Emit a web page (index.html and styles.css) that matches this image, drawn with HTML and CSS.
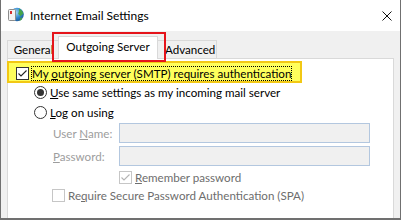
FILE: index.html
```html
<!DOCTYPE html>
<html>
<head>
<meta charset="utf-8">
<title>Internet Email Settings</title>
<link rel="stylesheet" href="styles.css">
</head>
<body>
<div class="window">
  <div class="titlebar">
    <svg class="app-icon" width="17" height="17" viewBox="0 0 17 17">
      <defs>
        <radialGradient id="globe" cx="0.4" cy="0.35" r="0.75">
          <stop offset="0" stop-color="#a6dcf7"/>
          <stop offset="0.55" stop-color="#2f86cc"/>
          <stop offset="1" stop-color="#1a4f8e"/>
        </radialGradient>
      </defs>
      <circle cx="10" cy="8.5" r="6.8" fill="url(#globe)"/>
      <path d="M12 2.6 Q15.6 4.2 16.4 8 Q14.6 8.4 13.6 10.6 Q12.6 8.6 11.2 8 Q12.4 5.6 12 2.6 Z" fill="#47a548"/>
      <path d="M13.5 11.5 Q15 12 15.6 11.2 Q14.6 14 12.6 15 Q13 13 13.5 11.5 Z" fill="#47a548"/>
      <rect x="1.5" y="3.5" width="7" height="11" rx="1" fill="#f2f2f2" stroke="#8c8c8c"/>
      <rect x="3" y="5" width="2" height="3" fill="#d62f2f"/>
    </svg>
    <span class="title">Internet Email Settings</span>
    <svg class="close" width="10" height="10" viewBox="0 0 10 10">
      <path d="M0.5 0.5 L9.5 9.5 M9.5 0.5 L0.5 9.5" stroke="#111" stroke-width="1" fill="none"/>
    </svg>
  </div>
  <div class="client">
    <div class="tabs">
      <div class="tab tab-general">General</div>
      <div class="tab tab-selected">Outgoing Server</div>
      <div class="tab tab-advanced">Advanced</div>
    </div>
    <div class="panel">
      <div class="highlight">
        <span class="checkbox">
          <svg width="11" height="11" viewBox="0 0 11 11"><path d="M1.5 5.5 L4 8 L9.5 2.5" stroke="#222" stroke-width="1.1" fill="none"/></svg>
        </span>
        <span class="focus-text">My <u>o</u>utgoing server (SMTP) requires authentication</span>
      </div>
      <div class="option first">
        <span class="radio on"></span>
        <span><u>U</u>se same settings as my incoming mail server</span>
      </div>
      <div class="option">
        <span class="radio"></span>
        <span><u>L</u>og on using</span>
      </div>
      <div class="field">
        <span class="field-label">User <u>N</u>ame:</span>
        <span class="input"></span>
      </div>
      <div class="field second">
        <span class="field-label"><u>P</u>assword:</span>
        <span class="input"></span>
      </div>
      <div class="check-row remember">
        <span class="checkbox disabled">
          <svg width="11" height="11" viewBox="0 0 11 11"><path d="M1.5 5.5 L4 8 L9.5 2.5" stroke="#b4b4b4" stroke-width="1.1" fill="none"/></svg>
        </span>
        <span class="check-label"><u>R</u>emember password</span>
      </div>
      <div class="check-row spa">
        <span class="checkbox disabled"></span>
        <span class="check-label">Re<u>q</u>uire Secure Password Authentication (SPA)</span>
      </div>
    </div>
  </div>
  <div class="callout"></div>
</div>
</body>
</html>
```
FILE: styles.css
```css
* {
  box-sizing: border-box;
}

html,
body {
  margin: 0;
  padding: 0;
}

body {
  width: 401px;
  height: 220px;
  overflow: hidden;
  background: #f0f0f0;
  font-family: Lato, "Noto Sans", sans-serif;
  font-size: 11.6px;
  color: #000;
}

.window {
  position: relative;
  width: 401px;
  height: 220px;
  border-left: 1px solid #707070;
  border-right: 1px solid #707070;
  border-bottom: 2px solid #707070;
  background: #f0f0f0;
  display: flex;
  flex-direction: column;
  overflow: hidden;
}

.titlebar {
  height: 31px;
  flex: none;
  background: #fff;
  display: flex;
  align-items: center;
  padding-left: 6px;
  padding-right: 8px;
}

.app-icon {
  flex: none;
  margin-top: -2px;
}

.title {
  margin-left: 6px;
  font-size: 12px;
  line-height: 16px;
  color: #000;
  margin-top: 1px;
}

.close {
  margin-left: auto;
  flex: none;
}

.client {
  flex: 1;
  display: flex;
  flex-direction: column;
  padding-top: 5px;
}

.tabs {
  display: flex;
  align-items: flex-end;
  height: 23px;
  padding-left: 6px;
  flex: none;
}

.tab {
  height: 18px;
  margin-bottom: 1px;
  border: 1px solid #d9d9d9;
  border-bottom: 0;
  background: #f0f0f0;
  line-height: 17px;
  white-space: nowrap;
  overflow: hidden;
}

.tab-general {
  width: 53px;
  text-align: center;
}

.tab-selected {
  position: relative;
  z-index: 1;
  width: 100px;
  height: 23px;
  margin: 0 -2px;
  background: #fff;
  text-align: center;
  padding-top: 2px;
  line-height: 16px;
}

.tab-advanced {
  width: 61px;
  padding-left: 8px;
}

.panel {
  flex: 1;
  margin: -1px 6px 0 6px;
  background: #fff;
  border: 1px solid #d9d9d9;
  border-bottom: 0;
  display: flex;
  flex-direction: column;
  align-items: flex-start;
}

.highlight {
  display: flex;
  align-items: center;
  margin: 2px 0 0 -1px;
  height: 22px;
  padding: 3px 8px 0 7px;
  background: #ffff5c;
  border: 2px solid #f2c814;
}

.checkbox {
  width: 13px;
  height: 13px;
  flex: none;
  border: 1px solid #333;
  display: flex;
  align-items: center;
  justify-content: center;
}

.highlight .checkbox {
  background: #fff;
}

.focus-text {
  margin-left: 2px;
  border: 1px dotted #000;
  line-height: 13px;
  white-space: nowrap;
}

u {
  text-decoration: underline;
  text-underline-offset: 1px;
}

.option {
  height: 20px;
  display: flex;
  align-items: center;
  padding-left: 26px;
  white-space: nowrap;
}

.option.first {
  margin-top: -1px;
}

.radio {
  width: 13px;
  height: 13px;
  flex: none;
  border: 1px solid #333;
  border-radius: 50%;
  background: #fff;
  margin-right: 3px;
  display: flex;
  align-items: center;
  justify-content: center;
}

.radio.on::after {
  content: "";
  width: 7px;
  height: 7px;
  border-radius: 50%;
  background: #333;
}

.field {
  display: flex;
  align-items: center;
  margin-top: 1px;
  height: 20px;
}

.field.second {
  margin-top: 3px;
}

.field-label {
  width: 111px;
  padding-left: 45px;
  color: #9d9d9d;
  white-space: nowrap;
}

.input {
  width: 251px;
  height: 20px;
  border: 1px solid #b3c7df;
  background: #f0f0f0;
}

.check-row {
  display: flex;
  align-items: center;
  height: 18px;
  white-space: nowrap;
}

.remember {
  margin-top: 2px;
  padding-left: 111px;
}

.spa {
  padding-left: 44px;
}

.checkbox.disabled {
  border-color: #c6c6c6;
  background: #fff;
}

.check-label {
  margin-left: 3px;
  color: #6d6d6d;
}

.callout {
  position: absolute;
  left: 51px;
  top: 32px;
  width: 114px;
  height: 30px;
  border: 2px solid #e5141b;
  z-index: 5;
}
```
